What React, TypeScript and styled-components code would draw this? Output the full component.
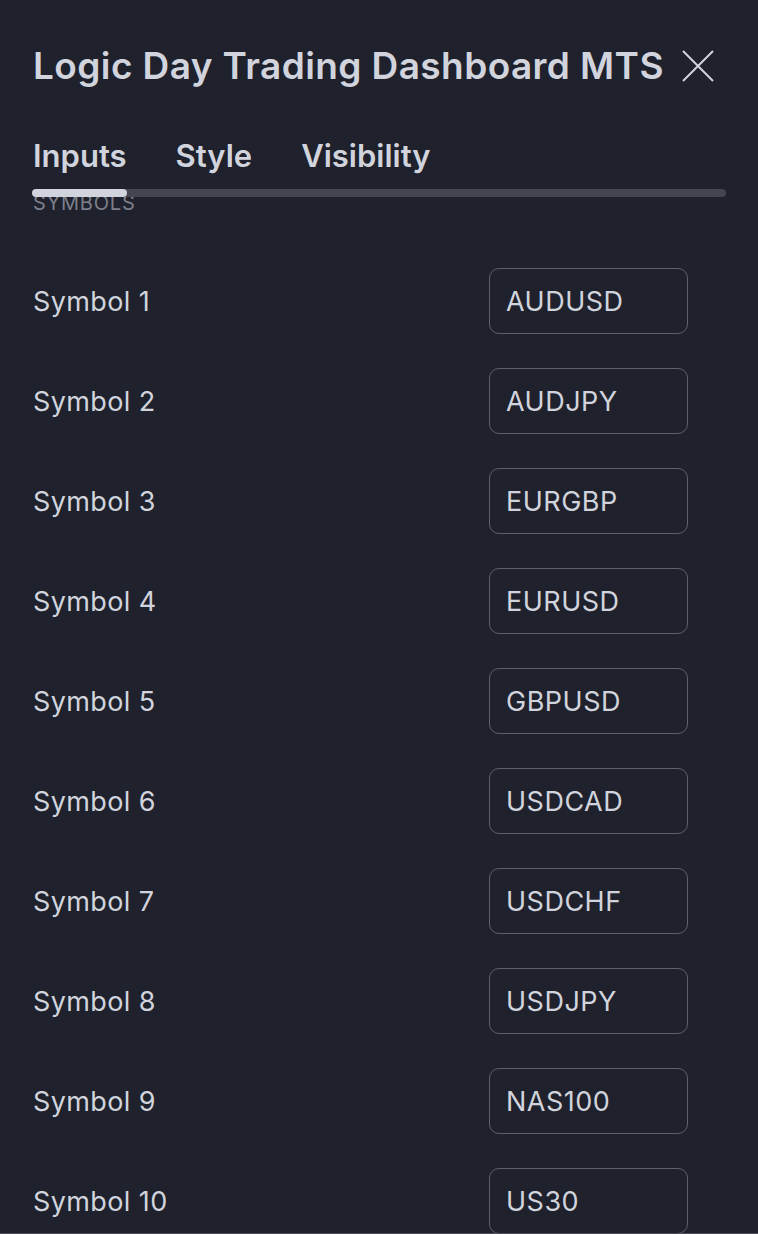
import React from "react";
import styled, { createGlobalStyle } from "styled-components";

const GlobalStyle = createGlobalStyle`
  html, body {
    margin: 0;
    padding: 0;
    background: #1f212d;
  }
  * { box-sizing: border-box; }
`;

const Panel = styled.div`
  width: 758px;
  height: 1234px;
  background: #1f212d;
  color: #d1d4dc;
  font-family: Inter, "Noto Sans", "Liberation Sans", sans-serif;
  display: flex;
  flex-direction: column;
  overflow: hidden;
  border-bottom: 1px solid #4a4d58;
`;

const TitleRow = styled.div`
  display: flex;
  align-items: center;
  justify-content: space-between;
  padding: 43px 44px 0 33px;
`;

const Title = styled.h1`
  margin: 0;
  font-size: 37px;
  line-height: 46px;
  font-weight: 600;
  letter-spacing: 0.4px;
  color: #d1d4dc;
`;

const CloseButton = styled.button`
  width: 32px;
  height: 32px;
  padding: 0;
  border: none;
  background: none;
  color: #d1d4dc;
  display: flex;
  align-items: center;
  justify-content: center;
  cursor: pointer;
`;

const Tabs = styled.div`
  display: flex;
  padding: 0 33px;
  margin-top: 49px;
`;

const Tab = styled.div<{ $gap?: number }>`
  font-size: 31px;
  line-height: 36px;
  font-weight: 600;
  letter-spacing: 0;
  color: #d1d4dc;
  margin-right: ${(p) => p.$gap ?? 0}px;
`;

const Track = styled.div`
  position: relative;
  margin: 15px 32px 0 33px;
  height: 8px;
  border-radius: 4px;
  background: #434651;
  z-index: 1;
`;

const Indicator = styled.div`
  position: absolute;
  left: -1px;
  top: 0;
  height: 8px;
  width: 95px;
  border-radius: 4px;
  background: #d1d4dc;
`;

const Content = styled.div`
  flex: 1;
  overflow: hidden;
  padding: 0 33px;
`;

const SectionLabel = styled.div`
  margin-top: -5px;
  font-size: 20px;
  line-height: 22px;
  color: #7c7f8a;
  text-transform: uppercase;
  letter-spacing: 0.8px;
`;

const Rows = styled.div`
  margin-top: 37px;
  display: flex;
  flex-direction: column;
`;

const Row = styled.div`
  height: 100px;
  display: flex;
  align-items: center;
  justify-content: space-between;
  padding-right: 37px;
`;

const Label = styled.span`
  font-size: 27px;
  color: #d1d4dc;
  letter-spacing: 0.4px;
`;

const Field = styled.div`
  width: 199px;
  height: 66px;
  border: 1.5px solid #5d606b;
  border-radius: 10px;
  display: flex;
  align-items: center;
  padding-left: 16px;
  font-size: 27px;
  color: #d1d4dc;
  letter-spacing: 0.5px;
`;

const symbols = [
  "AUDUSD",
  "AUDJPY",
  "EURGBP",
  "EURUSD",
  "GBPUSD",
  "USDCAD",
  "USDCHF",
  "USDJPY",
  "NAS100",
  "US30",
];

export default function App() {
  return (
    <>
      <GlobalStyle />
      <Panel>
        <TitleRow>
          <Title>Logic Day Trading Dashboard MTS</Title>
          <CloseButton aria-label="Close">
            <svg width="32" height="32" viewBox="0 0 32 32" fill="none">
              <path d="M1 1 L31 31 M31 1 L1 31" stroke="#d1d4dc" strokeWidth="2" />
            </svg>
          </CloseButton>
        </TitleRow>
        <Tabs>
          <Tab $gap={49}>Inputs</Tab>
          <Tab $gap={49}>Style</Tab>
          <Tab>Visibility</Tab>
        </Tabs>
        <Track>
          <Indicator />
        </Track>
        <Content>
          <SectionLabel>Symbols</SectionLabel>
          <Rows>
            {symbols.map((s, i) => (
              <Row key={s}>
                <Label>Symbol {i + 1}</Label>
                <Field>{s}</Field>
              </Row>
            ))}
          </Rows>
        </Content>
      </Panel>
    </>
  );
}
